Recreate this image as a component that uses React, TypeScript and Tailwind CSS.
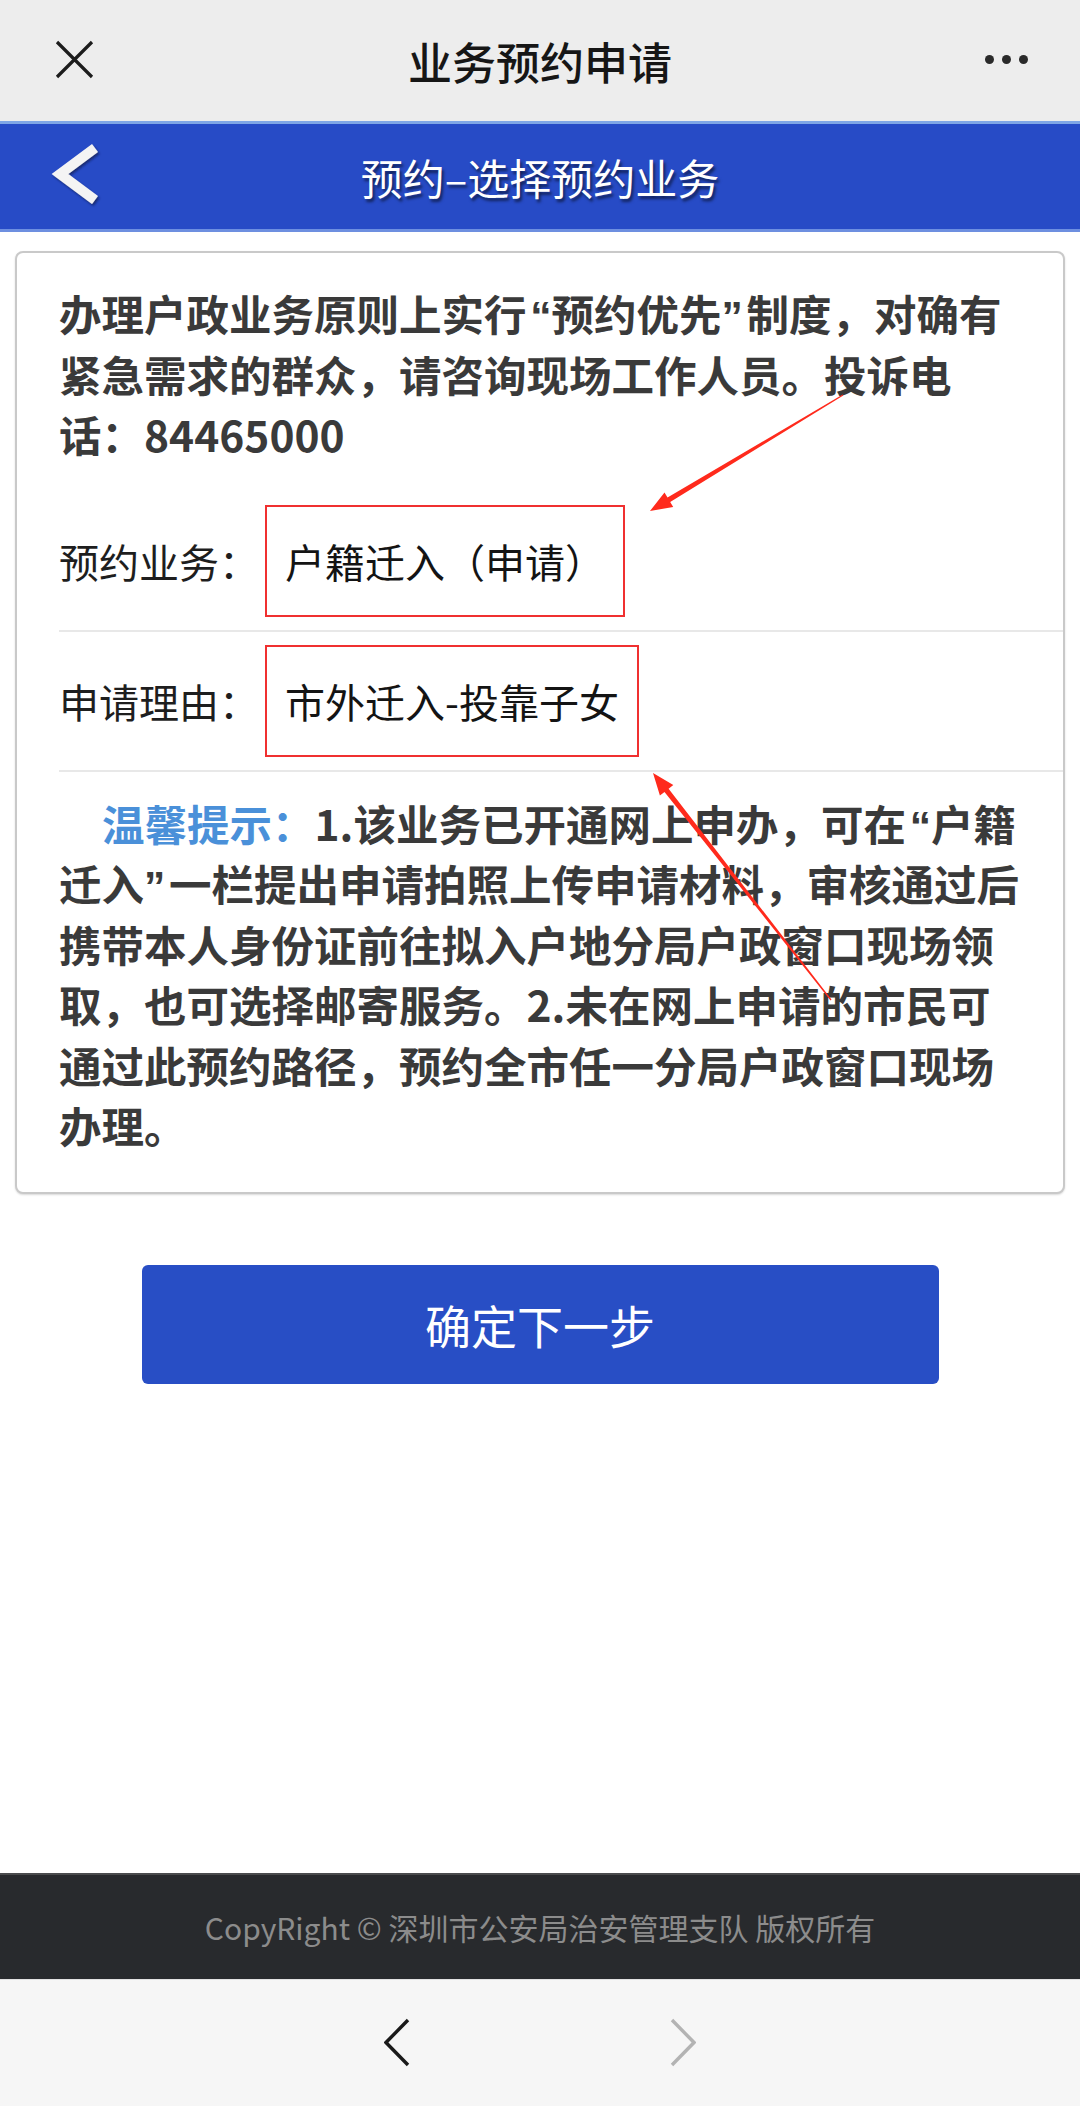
import * as React from 'react';

const CJK = { fontFamily: '"Noto Sans CJK SC", "Noto Sans", sans-serif' };

type Pt = [number, number];

// tapered red arrow, thin at the tail and widening toward the head
function arrowPoints(tail: Pt, tip: Pt): string {
  const dx = tip[0] - tail[0];
  const dy = tip[1] - tail[1];
  const len = Math.hypot(dx, dy);
  const ux = dx / len;
  const uy = dy / len;
  const nx = -uy;
  const ny = ux;
  const headLen = 22;
  const bx = tip[0] - ux * headLen;
  const by = tip[1] - uy * headLen;
  const pts: Pt[] = [
    [tail[0] + nx * 0.6, tail[1] + ny * 0.6],
    [bx + nx * 2.6, by + ny * 2.6],
    [bx + nx * 8.5, by + ny * 8.5],
    tip,
    [bx - nx * 8.5, by - ny * 8.5],
    [bx - nx * 2.6, by - ny * 2.6],
    [tail[0] - nx * 0.6, tail[1] - ny * 0.6],
  ];
  return pts.map((p) => `${p[0].toFixed(1)},${p[1].toFixed(1)}`).join(' ');
}

// compact quote marks, the glyph kept against the quoted word
function OpenQ() {
  return (
    <span className="inline-block w-[25px] indent-0 text-right leading-none [font-family:'Liberation_Sans',sans-serif]">
      “
    </span>
  );
}
function CloseQ() {
  return (
    <span className="inline-block w-[25px] indent-0 text-left leading-none [font-family:'Liberation_Sans',sans-serif]">
      ”
    </span>
  );
}

function TopBar() {
  return (
    <div className="relative flex h-[121px] items-center justify-center bg-[#ededed]">
      <svg className="absolute left-[55px] top-[40px]" width="39" height="39" viewBox="0 0 39 39">
        <path d="M2 2 L37 37 M37 2 L2 37" stroke="#1c1c1c" strokeWidth="3.2" fill="none" />
      </svg>
      <span className="text-[44px] font-medium text-[#161616]" style={CJK}>业务预约申请</span>
      <div className="absolute right-[52px] top-[55px] flex gap-[8px]">
        <span className="h-[9px] w-[9px] rounded-full bg-[#2a2a2a]" />
        <span className="h-[9px] w-[9px] rounded-full bg-[#2a2a2a]" />
        <span className="h-[9px] w-[9px] rounded-full bg-[#2a2a2a]" />
      </div>
    </div>
  );
}

function BlueBar() {
  return (
    <div className="relative flex h-[111px] items-center justify-center border-t-[3px] border-b-[3px] border-t-[#7fa6e6] border-b-[#6d8fe0] bg-[#274bc6]">
      <svg className="absolute left-[50px] top-[16px]" width="56" height="72" viewBox="0 0 56 72">
        <defs>
          <filter id="chev-shadow" x="-30%" y="-30%" width="160%" height="160%">
            <feDropShadow dx="1.5" dy="2" stdDeviation="1.2" floodColor="#0a1a50" floodOpacity="0.7" />
          </filter>
        </defs>
        <polyline points="45,8 10,34 45,60" stroke="#f4f4f4" strokeWidth="10" fill="none" strokeLinejoin="miter" filter="url(#chev-shadow)" />
      </svg>
      <span
        className="text-[42px] text-white [text-shadow:2px_3px_3px_rgba(0,0,0,0.55)]"
        style={CJK}
      >
        预约–选择预约业务
      </span>
    </div>
  );
}

function Row({ label, value }: { label: string; value: string }) {
  return (
    <div className="ml-[42px] flex items-center border-b-2 border-[#e8e8e8] py-[13px]">
      <span className="text-[40px] text-[#1e1e1e]" style={CJK}>{label}</span>
      <span
        className="ml-[6px] flex h-[112px] items-center border-2 border-[#f03030] px-[18px] text-[40px] text-[#141414]"
        style={CJK}
      >
        {value}
      </span>
    </div>
  );
}

function Card() {
  return (
    <div className="mx-[15px] mt-[19px] rounded-[8px] border-2 border-[#c9c9c9] bg-white shadow-[0_1px_2px_rgba(0,0,0,0.15)]">
      <p
        className="whitespace-nowrap pl-[42px] pr-[8px] pt-[30px] text-[42.5px] font-semibold leading-[60.5px] text-[#3a3a3a] [text-autospace:no-autospace]"
        style={CJK}
      >
        办理户政业务原则上实行<OpenQ />预约优先<CloseQ />制度，对确有
        <br />
        紧急需求的群众，请咨询现场工作人员。投诉电
        <br />
        话：84465000
      </p>
      <div className="mt-[27px]">
        <Row label="预约业务：" value="户籍迁入（申请）" />
        <Row label="申请理由：" value="市外迁入-投靠子女" />
      </div>
      <p
        className="whitespace-nowrap pl-[42px] pr-[8px] pb-[36px] pt-[21px] indent-[43px] text-[42.5px] font-semibold leading-[60.5px] text-[#3a3a3a] [text-autospace:no-autospace]"
        style={CJK}
      >
        <span className="text-[#4a90d9]">温馨提示：</span>1.该业务已开通网上申办，可在<OpenQ />户籍
        <br />
        迁入<CloseQ />一栏提出申请拍照上传申请材料，审核通过后
        <br />
        携带本人身份证前往拟入户地分局户政窗口现场领
        <br />
        取，也可选择邮寄服务。2.未在网上申请的市民可
        <br />
        通过此预约路径，预约全市任一分局户政窗口现场
        <br />
        办理。
      </p>
    </div>
  );
}

export default function App() {
  return (
    <div className="relative flex h-[2106px] w-[1080px] flex-col overflow-hidden bg-white">
      <TopBar />
      <BlueBar />
      <Card />
      <button
        className="mx-auto mt-[71px] flex h-[119px] w-[797px] items-center justify-center rounded-[6px] bg-[#284ec5] text-[46px] text-white"
        style={CJK}
      >
        确定下一步
      </button>
      <div className="flex-1" />
      <footer className="flex h-[106px] items-center justify-center border-t-2 border-[#4a4b4d] bg-[#282a2d]">
        <span className="text-[30px] text-[#8c8c8c]" style={CJK}>
          CopyRight © 深圳市公安局治安管理支队 版权所有
        </span>
      </footer>
      <div className="flex h-[127px] items-center justify-center gap-[256px] border-t border-[#e2e2e2] bg-[#f6f6f6]">
        <svg width="28" height="50" viewBox="0 0 28 50">
          <polyline points="24,2 2,24.5 24,47" stroke="#1a1a1a" strokeWidth="3.4" fill="none" />
        </svg>
        <svg width="28" height="50" viewBox="0 0 28 50">
          <polyline points="4,2 26,24.5 4,47" stroke="#b3b3b3" strokeWidth="3.4" fill="none" />
        </svg>
      </div>

      {/* red annotation arrows */}
      <svg className="pointer-events-none absolute left-0 top-0" width="1080" height="2106" viewBox="0 0 1080 2106">
        <polygon points={arrowPoints([843, 395], [650, 511])} fill="#ff2a1c" />
        <polygon points={arrowPoints([831, 1000], [653, 773])} fill="#ff2a1c" />
      </svg>
    </div>
  );
}
